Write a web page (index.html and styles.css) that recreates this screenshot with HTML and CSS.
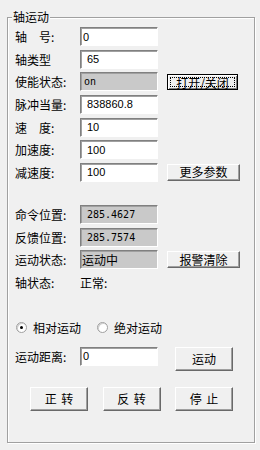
FILE: index.html
```html
<!DOCTYPE html>
<html lang="zh-CN">
<head>
  <meta charset="utf-8">
  <title>轴运动</title>
  <link rel="stylesheet" href="styles.css">
</head>
<body>
  <div class="group">
    <span class="group-title">轴运动</span>

    <div class="fields">
      <div class="row"><label>轴　号:</label><input class="box" type="text" value="0"></div>
      <div class="row"><label>轴类型</label><input class="box pad" type="text" value="65"></div>
      <div class="row">
        <label>使能状态:</label><input class="box ro mono" type="text" value="on" readonly>
        <button class="btn side default"><span class="focus">打开/关闭</span></button>
      </div>
      <div class="row"><label>脉冲当量:</label><input class="box pad" type="text" value="838860.8"></div>
      <div class="row"><label>速　度:</label><input class="box pad" type="text" value="10"></div>
      <div class="row"><label>加速度:</label><input class="box pad" type="text" value="100"></div>
      <div class="row">
        <label>减速度:</label><input class="box pad" type="text" value="100">
        <button class="btn side">更多参数</button>
      </div>
    </div>

    <div class="fields status">
      <div class="row"><label>命令位置:</label><input class="box ro mono pad" type="text" value="285.4627" readonly></div>
      <div class="row"><label>反馈位置:</label><input class="box ro mono pad" type="text" value="285.7574" readonly></div>
      <div class="row">
        <label>运动状态:</label><input class="box ro cjk" type="text" value="运动中" readonly>
        <button class="btn side">报警清除</button>
      </div>
      <div class="row"><label>轴状态:</label><span>正常:</span></div>
    </div>

    <div class="mode">
      <span class="opt"><span class="radio checked"></span>相对运动</span>
      <span class="opt"><span class="radio"></span>绝对运动</span>
    </div>

    <div class="row move">
      <label>运动距离:</label><input class="box" type="text" value="0">
      <button class="btn run">运动</button>
    </div>

    <div class="actions">
      <button class="btn act">正 转</button>
      <button class="btn act">反 转</button>
      <button class="btn act">停 止</button>
    </div>
  </div>
</body>
</html>
```

FILE: styles.css
```css
body {
  margin: 0;
  width: 260px;
  height: 450px;
  overflow: hidden;
  background: #f0f0f0;
  font-family: "Noto Sans CJK SC", "Liberation Sans", sans-serif;
  font-size: 12px;
  color: #000;
}

/* 分组框 */
.group {
  position: relative;
  box-sizing: border-box;
  width: 248px;
  height: 426px;
  margin: 17px 0 0 7px;
  padding: 9px 0 0 7px;
  border: 1px solid #a0a0a0;
  box-shadow: inset 1px 1px 0 #fff, 1px 1px 0 #fff;
}
.group-title {
  position: absolute;
  top: -8px;
  left: 4px;
  padding: 0 1px;
  line-height: 14px;
  background: #f0f0f0;
}

.fields {
  display: flex;
  flex-direction: column;
  gap: 3.67px;
}
.status {
  margin-top: 23px;
}

.row {
  display: flex;
  align-items: center;
  height: 19px;
}
.row label {
  width: 65px;
  line-height: 19px;
  white-space: nowrap;
}

/* 文本框 */
.box {
  box-sizing: border-box;
  width: 78px;
  height: 19px;
  margin: 0;
  padding: 0 0 0 2px;
  border: 1px solid;
  border-color: #808080 #fff #fff #808080;
  box-shadow: inset 1px 1px 0 #a0a0a0;
  background: #fff;
  font-family: "Liberation Sans", sans-serif;
  font-size: 11px;
  color: #000;
  outline: none;
}
.pad {
  padding-left: 6px;
}
.ro {
  background: #c9c9c9;
}
.mono {
  font-family: "DejaVu Sans Mono", monospace;
  font-size: 10px;
  padding-left: 3px;
}
.mono.pad {
  padding-left: 6px;
}
.cjk {
  font-family: "Noto Sans CJK SC", sans-serif;
  font-size: 12px;
  padding-left: 1px;
}

/* 按钮 */
.btn {
  box-sizing: border-box;
  margin: 0;
  padding: 0;
  border: 1px solid;
  border-color: #fff #696969 #696969 #fff;
  box-shadow: inset -1px -1px 0 #a0a0a0;
  background: #f0f0f0;
  font-family: "Noto Sans CJK SC", sans-serif;
  font-size: 12px;
  color: #000;
  line-height: 1;
}
.side {
  width: 73px;
  height: 17px;
  margin-left: 9px;
}
.default {
  width: 71px;
  height: 16px;
  border-color: #000;
  box-shadow: inset 1px 1px 0 #fff, inset -1px -1px 0 #808080;
  padding: 2px;
}
.focus {
  display: block;
  height: 100%;
  box-sizing: border-box;
  border: 1px dotted #000;
  line-height: 9px;
}

/* 单选 */
.mode {
  display: flex;
  align-items: center;
  gap: 16px;
  height: 19px;
  margin-top: 26px;
}
.opt {
  display: flex;
  align-items: center;
  gap: 6px;
  line-height: 19px;
}
.opt:first-child {
  margin-left: 1px;
}
.radio {
  position: relative;
  box-sizing: border-box;
  width: 11px;
  height: 11px;
  border: 1px solid #a0a0a0;
  border-radius: 50%;
  background: #fff;
  box-shadow: inset 1px 1px 0 #d0d0d0;
}
.radio.checked::after {
  content: "";
  position: absolute;
  top: 3px;
  left: 3px;
  width: 3px;
  height: 3px;
  border-radius: 50%;
  background: #000;
}

.move {
  height: 24px;
  align-items: flex-start;
  margin-top: 10px;
}
.run {
  width: 58px;
  height: 24px;
  margin-left: 17px;
}

.actions {
  display: flex;
  gap: 14.5px;
  margin: 16px 0 0 15px;
}
.act {
  width: 58px;
  height: 24px;
  word-spacing: 2px;
}
```
